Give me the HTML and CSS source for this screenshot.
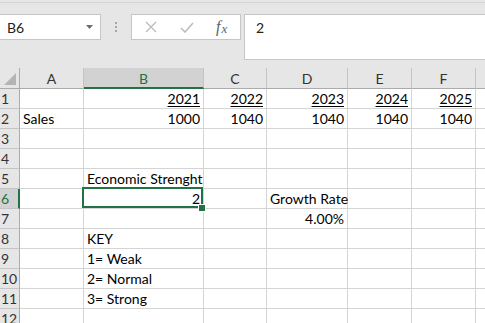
FILE: index.html
```html
<!DOCTYPE html>
<html lang="en">
<head>
    <meta charset="UTF-8">
    <title>Economic Strenght - Sheet1</title>
    <link rel="stylesheet" href="styles.css">
</head>
<body>
    <!-- Name box + formula bar -->
    <div class="toolbar">
        <div class="name-box">
            <span>B6</span>
            <svg class="drop" width="7" height="4" viewBox="0 0 7 4"><path d="M0 0H7L3.5 4Z" fill="#6d6d6d"/></svg>
        </div>
        <div class="grip"><i></i><i></i><i></i></div>
        <div class="fx-box">
            <svg width="12" height="12" viewBox="0 0 12 12"><path d="M1 1L11 11M11 1L1 11" stroke="#bdbdbd" stroke-width="1.4" fill="none"/></svg>
            <svg width="14" height="11" viewBox="0 0 14 11"><path d="M1 6L5 10L13 1" stroke="#bdbdbd" stroke-width="1.6" fill="none"/></svg>
            <span class="fx">f<span class="x">x</span></span>
        </div>
        <div class="formula">2</div>
    </div>

    <!-- Worksheet grid -->
    <div class="sheet">
        <div class="corner"></div>
        <div class="hd">A</div><div class="hd active">B</div><div class="hd">C</div><div class="hd">D</div><div class="hd">E</div><div class="hd">F</div><div class="hd last"></div>

        <div class="rh">1</div><div class="c"></div><div class="c r u">2021</div><div class="c r u">2022</div><div class="c r u">2023</div><div class="c r u">2024</div><div class="c r u">2025</div><div class="c last"></div>
        <div class="rh">2</div><div class="c">Sales</div><div class="c r">1000</div><div class="c r">1040</div><div class="c r">1040</div><div class="c r">1040</div><div class="c r">1040</div><div class="c last"></div>
        <div class="rh">3</div><div class="c"></div><div class="c"></div><div class="c"></div><div class="c"></div><div class="c"></div><div class="c"></div><div class="c last"></div>
        <div class="rh">4</div><div class="c"></div><div class="c"></div><div class="c"></div><div class="c"></div><div class="c"></div><div class="c"></div><div class="c last"></div>
        <div class="rh">5</div><div class="c"></div><div class="c">Economic Strenght</div><div class="c"></div><div class="c"></div><div class="c"></div><div class="c"></div><div class="c last"></div>
        <div class="rh active">6</div><div class="c"></div><div class="c r sel">2</div><div class="c"></div><div class="c">Growth Rate</div><div class="c"></div><div class="c"></div><div class="c last"></div>
        <div class="rh">7</div><div class="c"></div><div class="c"></div><div class="c"></div><div class="c r">4.00%</div><div class="c"></div><div class="c"></div><div class="c last"></div>
        <div class="rh">8</div><div class="c"></div><div class="c">KEY</div><div class="c"></div><div class="c"></div><div class="c"></div><div class="c"></div><div class="c last"></div>
        <div class="rh">9</div><div class="c"></div><div class="c">1= Weak</div><div class="c"></div><div class="c"></div><div class="c"></div><div class="c"></div><div class="c last"></div>
        <div class="rh">10</div><div class="c"></div><div class="c">2= Normal</div><div class="c"></div><div class="c"></div><div class="c"></div><div class="c"></div><div class="c last"></div>
        <div class="rh">11</div><div class="c"></div><div class="c">3= Strong</div><div class="c"></div><div class="c"></div><div class="c"></div><div class="c"></div><div class="c last"></div>
        <div class="rh">12</div><div class="c"></div><div class="c"></div><div class="c"></div><div class="c"></div><div class="c"></div><div class="c"></div><div class="c last"></div>
    </div>
</body>
</html>
```

FILE: styles.css
```css
* {
    box-sizing: border-box;
}

body {
    margin: 0;
    width: 485px;
    height: 323px;
    overflow: hidden;
    background: #e6e6e6;
    font-family: 'Lato', 'Liberation Sans', sans-serif;
    font-size: 14px;
    color: #000;
}

/* Formula bar */
.toolbar {
    height: 68px;
    display: flex;
    align-items: flex-start;
    padding-top: 13px;
    border-top: 1px solid #e6e6e6;
    position: relative;
}

.toolbar::before {
    content: '';
    position: absolute;
    left: 0;
    right: 0;
    top: 1px;
    height: 1px;
    background: #d4d4d4;
}

.name-box {
    width: 101px;
    height: 26px;
    background: #fff;
    border: 1px solid #c6c6c6;
    border-left: none;
    display: flex;
    align-items: center;
    justify-content: space-between;
    padding: 0 7px 0 7px;
    color: #222;
}

.grip {
    width: 30px;
    height: 26px;
    display: flex;
    flex-direction: column;
    align-items: center;
    justify-content: center;
    gap: 2px;
}

.grip i {
    display: block;
    width: 2px;
    height: 2px;
    background: #a6a6a6;
}

.fx-box {
    width: 110px;
    height: 26px;
    background: #fff;
    border: 1px solid #c6c6c6;
    display: flex;
    align-items: center;
    padding-left: 13px;
    gap: 23px;
}

.fx {
    font-family: 'Liberation Serif', serif;
    font-style: italic;
    font-size: 16px;
    color: #5f5f5f;
    margin-left: -1px;
    line-height: 1;
}

.fx .x {
    font-size: 13px;
    margin-left: 1px;
    position: relative;
    top: 1px;
}

.formula {
    flex: 1;
    height: 46px;
    margin-left: 3px;
    background: #fff;
    border: 1px solid #c6c6c6;
    border-right: none;
    padding: 4px 0 0 11px;
    color: #222;
}

/* Sheet grid */
.sheet {
    display: grid;
    grid-template-columns: 20px 64px 120px 63px 81px 64px 64px 1fr;
    grid-template-rows: 21px repeat(12, 20px);
    background: #fff;
}

.corner,
.hd,
.rh {
    background: #e6e6e6;
    color: #333;
    border-right: 1px solid #c4c4c4;
    border-bottom: 1px solid #ababab;
}

.corner {
    position: relative;
    border-right-color: #ababab;
}

.corner::after {
    content: '';
    position: absolute;
    right: 3px;
    bottom: 3px;
    border-left: 12px solid transparent;
    border-bottom: 12px solid #b4b4b4;
}

.hd {
    display: flex;
    align-items: center;
    justify-content: center;
    padding-top: 1px;
}

.hd.active {
    background: #d2d2d2;
    color: #217346;
    border-bottom: 2px solid #217346;
}

.rh {
    border-right: 1px solid #ababab;
    border-bottom: 1px solid #c4c4c4;
    display: flex;
    align-items: flex-end;
    padding: 0 0 1px 1px;
    line-height: 17px;
}

.rh.active {
    background: #d2d2d2;
    color: #217346;
    border-right: 2px solid #217346;
}

.c {
    border-right: 1px solid #d4d4d4;
    border-bottom: 1px solid #d4d4d4;
    display: flex;
    align-items: flex-end;
    padding: 0 3px 1px 3px;
    line-height: 17px;
    white-space: nowrap;
}

.c.r {
    justify-content: flex-end;
}

.c.u {
    text-decoration: underline;
    text-underline-offset: 2px;
}

.last {
    border-right: none;
}

/* Active cell */
.sel {
    position: relative;
}

.sel::before {
    content: '';
    position: absolute;
    left: -2px;
    top: -2px;
    right: 0;
    bottom: 0;
    border: 2px solid #217346;
}

.sel::after {
    content: '';
    position: absolute;
    right: -2px;
    bottom: -3px;
    width: 6px;
    height: 6px;
    background: #217346;
    outline: 1px solid #fff;
}
```
